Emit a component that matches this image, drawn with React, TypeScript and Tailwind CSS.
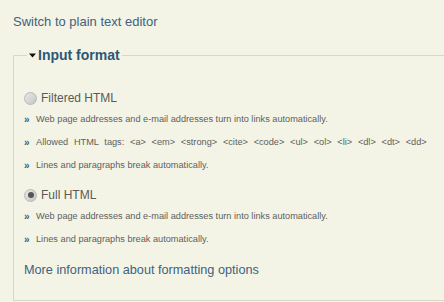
import React from "react";

const Bullet = ({ children, wide }: { children: React.ReactNode; wide?: boolean }) => (
  <div className="flex items-center h-[23px]">
    <span className="w-[12px] text-[10px] font-bold leading-none text-[#3d5f80]">»</span>
    <span
      className={
        wide
          ? "text-[9.2px] text-[#5e5e5e] whitespace-nowrap [word-spacing:3.2px]"
          : "text-[9.2px] text-[#5e5e5e] whitespace-nowrap"
      }
    >
      {children}
    </span>
  </div>
);

const Radio = ({ checked, label }: { checked?: boolean; label: string }) => (
  <div className="flex items-center h-[20px]">
    <span className="relative w-[13px] h-[13px] rounded-full border border-[#b8b8b8] bg-gradient-to-br from-[#e8e8e8] to-[#c6c6c6] flex items-center justify-center">
      {checked && <span className="w-[6px] h-[6px] rounded-full bg-[#555]" />}
    </span>
    <span className="ml-[4px] text-[12px] text-[#5a5a5a]">{label}</span>
  </div>
);

export default function App() {
  return (
    <div
      className="w-[444px] h-[302px] overflow-hidden bg-[#f3f4e5]"
      style={{ fontFamily: '"Liberation Sans", Arial, sans-serif' }}
    >
      <div className="w-[520px]">
        <div className="pl-[13px] pt-[12px] h-[30px] text-[13px] text-[#41617f]">Switch to plain text editor</div>
        <fieldset className="ml-[13px] mt-[16px] w-[500px] border border-[#d6d9c4] pl-[10px] pt-[23px] pb-[22px]">
          <legend className="ml-[3px] px-[2px] flex items-center text-[14px] leading-[19px] font-bold text-[#2f5675]">
            <svg width="7" height="5" viewBox="0 0 7 5" className="mr-[2px]">
              <path d="M0 0.5 L7 0.5 L3.5 4.5 Z" fill="#111" />
            </svg>
            Input format
          </legend>
          <Radio label="Filtered HTML" />
          <Bullet>Web page addresses and e-mail addresses turn into links automatically.</Bullet>
          <Bullet wide>Allowed HTML tags: &lt;a&gt; &lt;em&gt; &lt;strong&gt; &lt;cite&gt; &lt;code&gt; &lt;ul&gt; &lt;ol&gt; &lt;li&gt; &lt;dl&gt; &lt;dt&gt; &lt;dd&gt;</Bullet>
          <Bullet>Lines and paragraphs break automatically.</Bullet>
          <div className="h-[8px]" />
          <Radio checked label="Full HTML" />
          <Bullet>Web page addresses and e-mail addresses turn into links automatically.</Bullet>
          <Bullet>Lines and paragraphs break automatically.</Bullet>
          <div className="mt-[12px] leading-[15px] text-[12.7px] text-[#41617f]">More information about formatting options</div>
        </fieldset>
      </div>
    </div>
  );
}
